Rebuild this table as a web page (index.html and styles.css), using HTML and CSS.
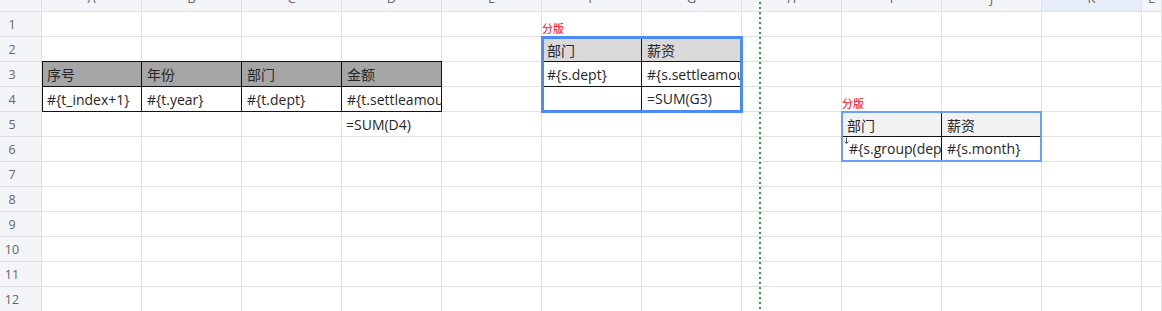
FILE: index.html
```html
<!DOCTYPE html>
<html lang="zh">
<head>
<meta charset="utf-8">
<title>Sheet</title>
<link rel="stylesheet" href="styles.css">
</head>
<body>
<div class="sheet">
  <div class="cells">
    <div class="corner"></div>
    <div class="ch"><span>A</span></div><div class="ch"><span>B</span></div><div class="ch"><span>C</span></div><div class="ch"><span>D</span></div><div class="ch"><span>E</span></div><div class="ch"><span>F</span></div><div class="ch"><span>G</span></div><div class="ch"><span>H</span></div><div class="ch"><span>I</span></div><div class="ch"><span>J</span></div><div class="ch sel"><span>K</span></div><div class="ch"><span>L</span></div>

    <div class="rh"><span>1</span></div><div class="c"></div><div class="c"></div><div class="c"></div><div class="c"></div><div class="c"></div><div class="c"></div><div class="c"></div><div class="c"></div><div class="c"></div><div class="c"></div><div class="c"></div><div class="c"></div>
    <div class="rh"><span>2</span></div><div class="c"></div><div class="c"></div><div class="c"></div><div class="c"></div><div class="c"></div><div class="c"></div><div class="c"></div><div class="c"></div><div class="c"></div><div class="c"></div><div class="c"></div><div class="c"></div>
    <div class="rh"><span>3</span></div><div class="c"></div><div class="c"></div><div class="c"></div><div class="c"></div><div class="c"></div><div class="c"></div><div class="c"></div><div class="c"></div><div class="c"></div><div class="c"></div><div class="c"></div><div class="c"></div>
    <div class="rh"><span>4</span></div><div class="c"></div><div class="c"></div><div class="c"></div><div class="c"></div><div class="c"></div><div class="c"></div><div class="c"></div><div class="c"></div><div class="c"></div><div class="c"></div><div class="c"></div><div class="c"></div>
    <div class="rh"><span>5</span></div><div class="c"></div><div class="c"></div><div class="c"></div><div class="c">=SUM(D4)</div><div class="c"></div><div class="c"></div><div class="c"></div><div class="c"></div><div class="c"></div><div class="c"></div><div class="c"></div><div class="c"></div>
    <div class="rh"><span>6</span></div><div class="c"></div><div class="c"></div><div class="c"></div><div class="c"></div><div class="c"></div><div class="c"></div><div class="c"></div><div class="c"></div><div class="c"></div><div class="c"></div><div class="c"></div><div class="c"></div>
    <div class="rh"><span>7</span></div><div class="c"></div><div class="c"></div><div class="c"></div><div class="c"></div><div class="c"></div><div class="c"></div><div class="c"></div><div class="c"></div><div class="c"></div><div class="c"></div><div class="c"></div><div class="c"></div>
    <div class="rh"><span>8</span></div><div class="c"></div><div class="c"></div><div class="c"></div><div class="c"></div><div class="c"></div><div class="c"></div><div class="c"></div><div class="c"></div><div class="c"></div><div class="c"></div><div class="c"></div><div class="c"></div>
    <div class="rh"><span>9</span></div><div class="c"></div><div class="c"></div><div class="c"></div><div class="c"></div><div class="c"></div><div class="c"></div><div class="c"></div><div class="c"></div><div class="c"></div><div class="c"></div><div class="c"></div><div class="c"></div>
    <div class="rh"><span>10</span></div><div class="c"></div><div class="c"></div><div class="c"></div><div class="c"></div><div class="c"></div><div class="c"></div><div class="c"></div><div class="c"></div><div class="c"></div><div class="c"></div><div class="c"></div><div class="c"></div>
    <div class="rh"><span>11</span></div><div class="c"></div><div class="c"></div><div class="c"></div><div class="c"></div><div class="c"></div><div class="c"></div><div class="c"></div><div class="c"></div><div class="c"></div><div class="c"></div><div class="c"></div><div class="c"></div>
    <div class="rh"><span>12</span></div><div class="c"></div><div class="c"></div><div class="c"></div><div class="c"></div><div class="c"></div><div class="c"></div><div class="c"></div><div class="c"></div><div class="c"></div><div class="c"></div><div class="c"></div><div class="c"></div>
  </div>

  <div class="layer">
    <div class="t1">
      <div class="hd first">序号</div><div class="hd">年份</div><div class="hd">部门</div><div class="hd">金额</div>
      <div class="first">#{t_index+1}</div><div>#{t.year}</div><div>#{t.dept}</div><div>#{t.settleamount}</div>
    </div>

    <div class="lbl lbl1">分版</div>
    <div class="t2">
      <div class="hd a">部门</div><div class="hd b">薪资</div>
      <div class="a">#{s.dept}</div><div class="b">#{s.settleamount}</div>
      <div class="a last"></div><div class="b last">=SUM(G3)</div>
    </div>

    <div class="lbl lbl2">分版</div>
    <div class="t3">
      <div class="hd a">部门</div><div class="hd b">薪资</div>
      <div class="a last"><svg class="arrow" width="5" height="7" viewBox="0 0 5 7"><path d="M2.5 0.5V6.5M0.5 4.5L2.5 6.5L4.5 4.5" fill="none" stroke="#555" stroke-width="1"/></svg>#{s.group(dept)}</div><div class="b last">#{s.month}</div>
    </div>

    <div class="pb"></div>
  </div>
</div>
</body>
</html>
```

FILE: styles.css
```css
body {
  margin: 0;
  width: 1162px;
  height: 311px;
  overflow: hidden;
  background: #fff;
  font-family: "Open Sans", "Noto Sans CJK SC", sans-serif;
  font-size: 14px;
  color: #262626;
}

.sheet {
  display: grid;
}

.cells,
.layer {
  grid-area: 1 / 1;
  display: grid;
  grid-template-columns: 42px repeat(11, 100px) 20px;
  grid-template-rows: 12px repeat(12, 25px);
}

.cells > div {
  box-sizing: border-box;
  border-right: 1px solid #e2e2e2;
  border-bottom: 1px solid #e2e2e2;
  overflow: hidden;
  white-space: nowrap;
}

.corner,
.ch,
.rh {
  background: #f4f5f8;
}

.ch {
  display: flex;
  align-items: flex-end;
  justify-content: center;
  color: #666;
  font-size: 13px;
}

.ch span {
  flex: none;
  height: 25px;
  line-height: 25px;
}

.ch.sel {
  background: #e7edf8;
}

.rh {
  display: flex;
  align-items: center;
  color: #666;
  font-size: 12.5px;
}

.rh span {
  width: 24px;
  text-align: center;
}

.c {
  display: flex;
  align-items: center;
  padding-left: 4px;
}

/* overlay tables */
.t1,
.t2,
.t3 {
  display: grid;
  background: #fff;
}

.t1 > div,
.t2 > div,
.t3 > div {
  box-sizing: border-box;
  display: flex;
  align-items: center;
  overflow: hidden;
  white-space: nowrap;
}

.t1 {
  grid-column: 2 / 6;
  grid-row: 4 / 6;
  margin-top: -1px;
  border-top: 1px solid #111;
  border-left: 1px solid #111;
  grid-template-columns: 99px 100px 100px 100px;
  grid-template-rows: 25px 25px;
}

.t1 > div {
  border-right: 1px solid #111;
  border-bottom: 1px solid #111;
  padding-left: 5px;
}

.t1 > div.first {
  padding-left: 4px;
}

.t1 .hd {
  background: #a6a6a6;
}

.t2 {
  grid-column: 7 / 9;
  grid-row: 3 / 6;
  margin: -1px;
  border: 3px solid #4c8bf5;
  grid-template-columns: 98px 98px;
  grid-template-rows: 23px 25px 23px;
}

.t2 > div {
  border-bottom: 1px solid #111;
}

.t2 > div.last,
.t3 > div.last {
  border-bottom: none;
}

.t2 .a {
  border-right: 1px solid #111;
  padding-left: 3px;
}

.t2 .b {
  padding-left: 5px;
}

.t2 .hd {
  background: #d9d9d9;
}

.t3 {
  grid-column: 10 / 12;
  grid-row: 6 / 8;
  margin: -1px 0 0 -1px;
  border: 2px solid #6b9ef7;
  grid-template-columns: 99px 98px;
  grid-template-rows: 24px 23px;
}

.t3 > div {
  border-bottom: 1px solid #111;
}

.t3 .a {
  border-right: 1px solid #111;
  padding-left: 4px;
}

.t3 .a.last {
  padding-left: 0;
}

.t3 .b {
  padding-left: 5px;
}

.t3 .hd {
  background: #f2f2f2;
}

.arrow {
  flex: none;
  align-self: flex-start;
  margin: 0 0 0 1px;
}

.lbl {
  align-self: end;
  justify-self: start;
  margin-bottom: 3px;
  color: #ff0000;
  font-family: "Noto Sans CJK SC", sans-serif;
  font-size: 11px;
  line-height: 11px;
}

.lbl1 {
  grid-column: 7;
  grid-row: 2;
}

.lbl2 {
  grid-column: 10;
  grid-row: 5;
}

.pb {
  grid-column: 9;
  grid-row: 1 / -1;
  justify-self: start;
  width: 2px;
  margin-left: 17px;
  background: repeating-linear-gradient(to bottom, transparent 0 2px, #2e9b3c 2px 4px, transparent 4px 5px);
}
```
